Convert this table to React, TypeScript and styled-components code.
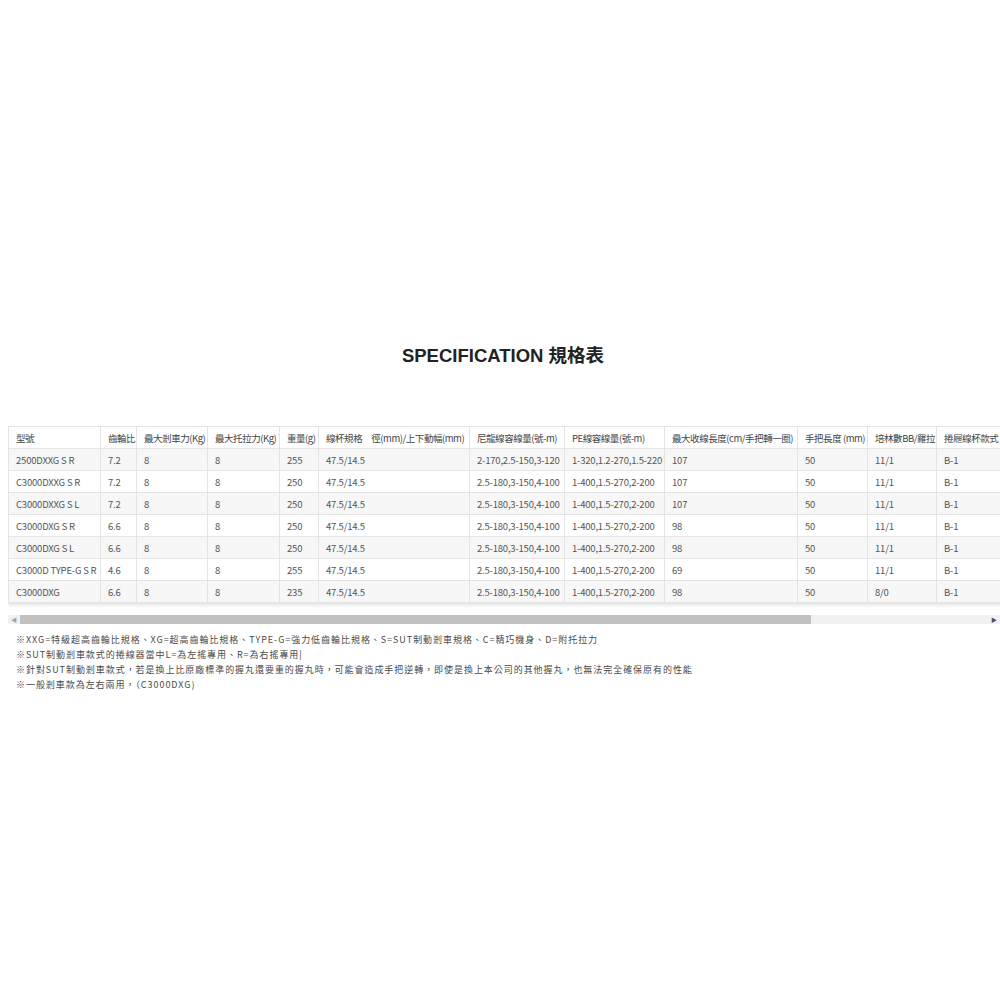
import styled, { createGlobalStyle } from "styled-components";

const GlobalStyle = createGlobalStyle`
  body {
    margin: 0;
    background: #fff;
    font-family: "Noto Sans CJK TC", "Noto Sans", sans-serif;
  }
`;

const Page = styled.div`
  width: 1000px;
  height: 1000px;
  padding: 344px 0 0 8px;
  box-sizing: border-box;
`;

const Title = styled.h2`
  margin: 0 0 58px;
  text-align: center;
  font-family: "Liberation Sans", "Noto Sans CJK TC", sans-serif;
  font-size: 18.5px;
  line-height: 24px;
  font-weight: 700;
  color: #222;
  padding-right: 2px;
`;

const Scroller = styled.div`
  width: 992px;
  overflow: hidden;
  padding-bottom: 12px;
`;

const Table = styled.table`
  border-collapse: collapse;
  table-layout: fixed;
  width: 1220px;
  box-shadow: 0 2px 4px rgba(0, 0, 0, 0.12);
  font-family: "Noto Sans CJK TC", "Noto Sans", sans-serif;
  font-size: 9.5px;
  color: #555;
`;

const Row = styled.tr<{ $shade?: boolean }>`
  background: ${(p) => (p.$shade ? "#f7f7f7" : "#fff")};
`;

const Cell = styled.td`
  border: 1px solid #e4e4e4;
  height: 21px;
  padding: 0 7px;
  white-space: nowrap;
  overflow: hidden;
  letter-spacing: -0.2px;
`;

const Head = styled(Cell).attrs({ as: "th" })`
  font-weight: 400;
  text-align: left;
  color: #444;
  padding: 0 5px 0 7px;
  letter-spacing: -0.45px;
`;

const ScrollBar = styled.div`
  width: 992px;
  height: 9px;
  background: #f1f1f1;
  display: flex;
  align-items: center;
`;

const Arrow = styled.span<{ $dark?: boolean }>`
  width: 12px;
  display: flex;
  justify-content: center;
  font-size: 6px;
  color: ${(p) => (p.$dark ? "#505050" : "#a3a3a3")};
`;

const Thumb = styled.div`
  width: 791px;
  height: 9px;
  background: #c1c1c1;
`;

const Spacer = styled.div`
  flex: 1;
`;

const Notes = styled.div`
  padding: 8px 0 0 8px;
  font-size: 9px;
  line-height: 15px;
  color: #4a4a4a;
  letter-spacing: 0.95px;
`;

const widths = [92, 36, 71, 72, 39, 151, 95, 100, 133, 70, 69, 292];

const headers = [
  "型號",
  "齒輪比",
  "最大剎車力(Kg)",
  "最大托拉力(Kg)",
  "重量(g)",
  "線杯規格　徑(mm)/上下動幅(mm)",
  "尼龍線容線量(號-m)",
  "PE線容線量(號-m)",
  "最大收線長度(cm/手把轉一圈)",
  "手把長度 (mm)",
  "培林數BB/羅拉",
  "捲屜線杯款式",
];

const rows = [
  ["2500DXXG S R", "7.2", "8", "8", "255", "47.5/14.5", "2-170,2.5-150,3-120", "1-320,1.2-270,1.5-220", "107", "50", "11/1", "B-1"],
  ["C3000DXXG S R", "7.2", "8", "8", "250", "47.5/14.5", "2.5-180,3-150,4-100", "1-400,1.5-270,2-200", "107", "50", "11/1", "B-1"],
  ["C3000DXXG S L", "7.2", "8", "8", "250", "47.5/14.5", "2.5-180,3-150,4-100", "1-400,1.5-270,2-200", "107", "50", "11/1", "B-1"],
  ["C3000DXG S R", "6.6", "8", "8", "250", "47.5/14.5", "2.5-180,3-150,4-100", "1-400,1.5-270,2-200", "98", "50", "11/1", "B-1"],
  ["C3000DXG S L", "6.6", "8", "8", "250", "47.5/14.5", "2.5-180,3-150,4-100", "1-400,1.5-270,2-200", "98", "50", "11/1", "B-1"],
  ["C3000D TYPE-G S R", "4.6", "8", "8", "255", "47.5/14.5", "2.5-180,3-150,4-100", "1-400,1.5-270,2-200", "69", "50", "11/1", "B-1"],
  ["C3000DXG", "6.6", "8", "8", "235", "47.5/14.5", "2.5-180,3-150,4-100", "1-400,1.5-270,2-200", "98", "50", "8/0", "B-1"],
];

const notes = [
  "※XXG=特級超高齒輪比規格、XG=超高齒輪比規格、TYPE-G=強力低齒輪比規格、S=SUT制動剎車規格、C=精巧機身、D=附托拉力",
  "※SUT制動剎車款式的捲線器當中L=為左搖專用、R=為右搖專用|",
  "※針對SUT制動剎車款式，若是換上比原廠標準的握丸還要重的握丸時，可能會造成手把逆轉，即使是換上本公司的其他握丸，也無法完全確保原有的性能",
  "※一般剎車款為左右兩用，（C3000DXG)",
];

const App = () => {
  return (
    <Page>
      <GlobalStyle />
      <Title>SPECIFICATION 規格表</Title>
      <Scroller>
        <Table>
          <colgroup>
            {widths.map((w, i) => (
              <col key={i} style={{ width: w }} />
            ))}
          </colgroup>
          <thead>
            <Row>
              {headers.map((h) => (
                <Head key={h}>{h}</Head>
              ))}
            </Row>
          </thead>
          <tbody>
            {rows.map((r, i) => (
              <Row key={r[0]} $shade={i % 2 === 0}>
                {r.map((c, j) => (
                  <Cell key={j}>{c}</Cell>
                ))}
              </Row>
            ))}
          </tbody>
        </Table>
      </Scroller>
      <ScrollBar>
        <Arrow>◀</Arrow>
        <Thumb />
        <Spacer />
        <Arrow $dark>▶</Arrow>
      </ScrollBar>
      <Notes>
        {notes.map((n) => (
          <div key={n}>{n}</div>
        ))}
      </Notes>
    </Page>
  );
};

export default App;
